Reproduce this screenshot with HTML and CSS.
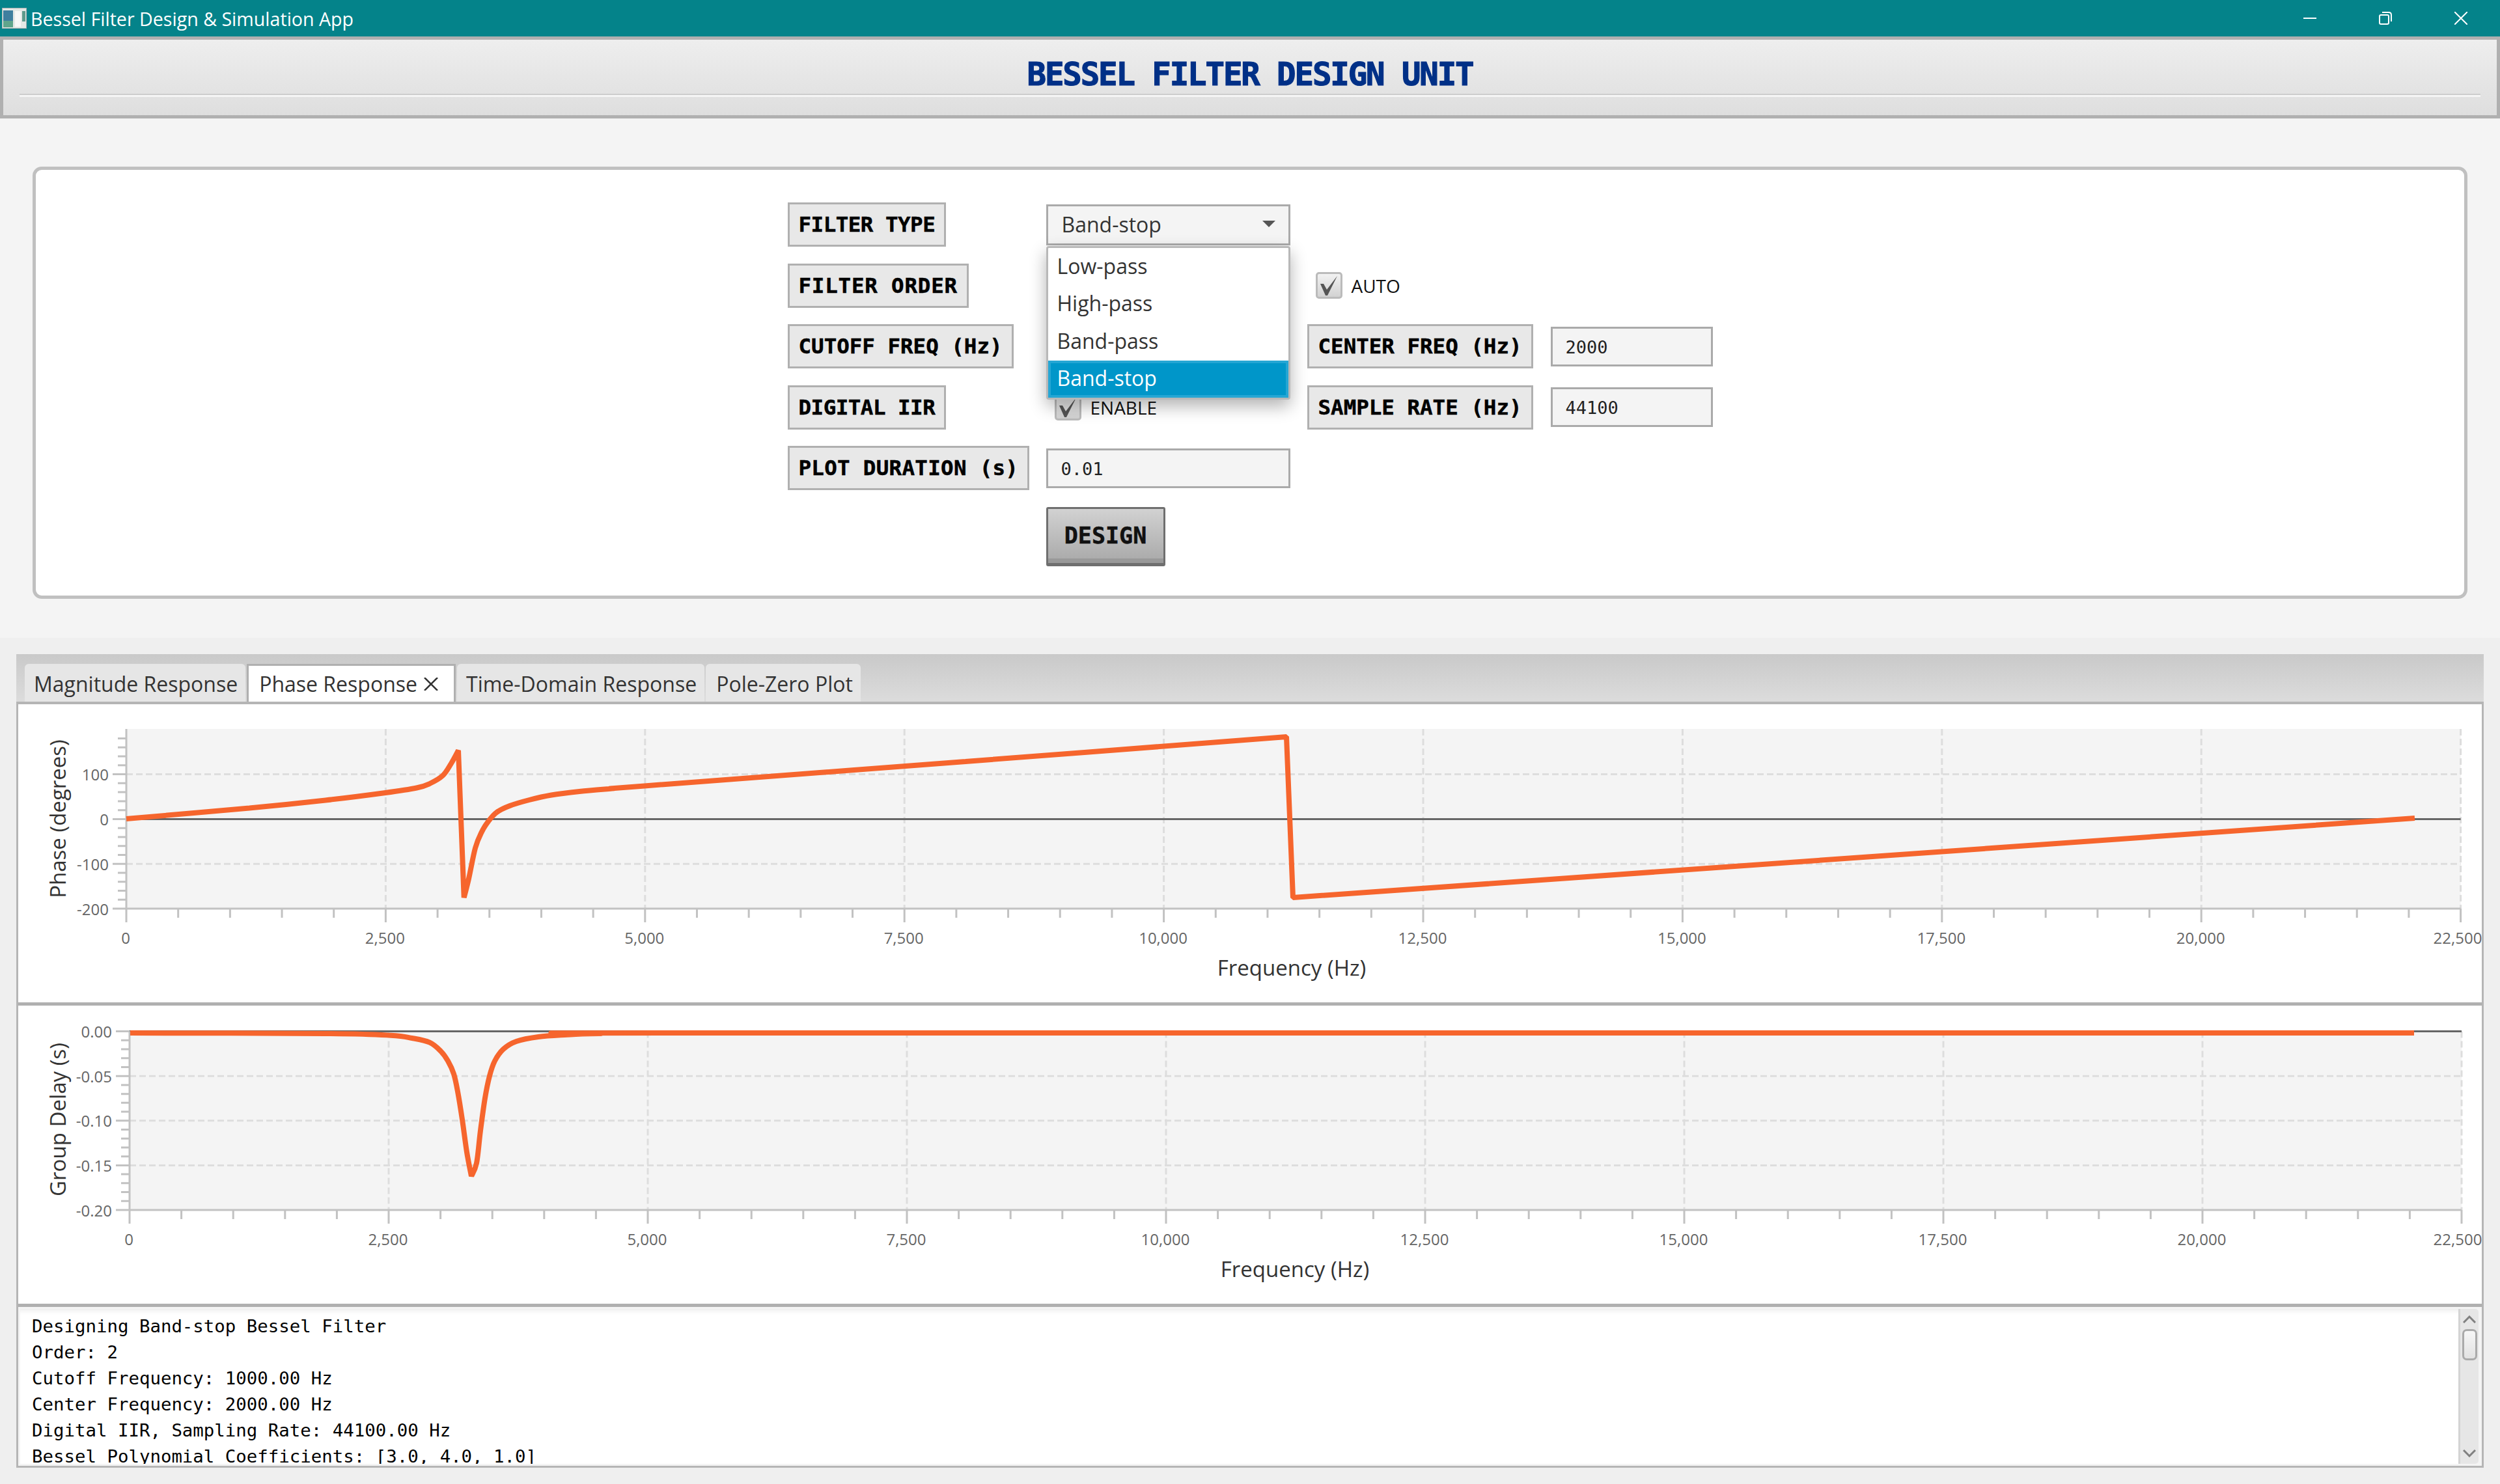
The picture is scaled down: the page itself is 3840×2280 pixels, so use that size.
FILE: index.html
```html
<!DOCTYPE html>
<html lang="en">
<head>
    <meta charset="UTF-8">
    <title>Bessel Filter Design &amp; Simulation App</title>
    <link rel="stylesheet" href="styles.css">
</head>
<body>
    <div class="titlebar">
        <svg class="app-icon" viewBox="0 0 38 32">
            <rect x="0.5" y="0.5" width="37" height="31" fill="#e4e8e6" stroke="#a9b1b2"/>
            <rect x="2" y="4" width="15" height="26" fill="#3f7f9f"/>
            <rect x="2" y="20" width="15" height="10" fill="#5fa58c"/>
            <rect x="20" y="5" width="9" height="24" fill="#f7f7f7"/>
            <rect x="31" y="5" width="5" height="16" fill="#5f9a8c"/>
        </svg>
        <span class="window-title">Bessel Filter Design &amp; Simulation App</span>
        <div class="window-buttons">
            <svg viewBox="0 0 20 20"><path d="M0 10H20"/></svg>
            <svg viewBox="0 0 20 20"><rect x="1" y="5" width="14" height="14" rx="2"/><path d="M5 1H15Q19 1 19 5V15"/></svg>
            <svg viewBox="0 0 20 20"><path d="M0 0L20 20M20 0L0 20"/></svg>
        </div>
    </div>

    <header class="app-header">
        <h1>BESSEL FILTER DESIGN UNIT</h1>
        <div class="groove"></div>
    </header>

    <section class="card">
        <form class="form-grid">
            <div class="field-label tight row1">FILTER TYPE</div>
            <div class="combo row1">
                <span>Band-stop</span>
                <svg class="combo-arrow" viewBox="0 0 20 10"><path d="M0 0H20L10 10Z"/></svg>
            </div>

            <div class="field-label wide row2">FILTER ORDER</div>
            <input class="field-input row2" type="text" readonly>
            <label class="check row2">
                <span class="check-box"><svg viewBox="0 0 41 41"><path d="M7 18L12 18L17 27L33 6L18 36L15 36Z"/></svg></span>
                AUTO
            </label>

            <div class="field-label row3">CUTOFF FREQ (Hz)</div>
            <input class="field-input row3" type="text" readonly>
            <div class="field-label row3">CENTER FREQ (Hz)</div>
            <input class="field-input row3" type="text" value="2000" readonly>

            <div class="field-label tight row4">DIGITAL IIR</div>
            <label class="check row4">
                <span class="check-box"><svg viewBox="0 0 41 41"><path d="M7 18L12 18L17 27L33 6L18 36L15 36Z"/></svg></span>
                ENABLE
            </label>
            <div class="field-label row4">SAMPLE RATE (Hz)</div>
            <input class="field-input row4" type="text" value="44100" readonly>

            <div class="field-label plot-label row5">PLOT DURATION (s)</div>
            <input class="field-input row5" type="text" value="0.01" readonly>

            <button class="design-btn" type="button">DESIGN</button>

            <ul class="combo-popup">
                <li>Low-pass</li>
                <li>High-pass</li>
                <li>Band-pass</li>
                <li class="selected">Band-stop</li>
            </ul>
        </form>
    </section>

    <section class="lower">
        <div class="tab-header">
            <div class="tab">Magnitude Response</div>
            <div class="tab active">
                Phase Response
                <svg class="tab-close" viewBox="0 0 22 20"><path d="M1 0L21 20M21 0L1 20"/></svg>
            </div>
            <div class="tab">Time-Domain Response</div>
            <div class="tab">Pole-Zero Plot</div>
        </div>
        <div class="tab-content">
            <svg class="chart" id="phaseChart" viewBox="28 1082 3784 458"></svg>
            <div class="divider"></div>
            <svg class="chart" id="delayChart" viewBox="28 1545 3784 458"></svg>
            <div class="divider"></div>
            <div class="log">
                <div class="log-text">
                    <div>Designing Band-stop Bessel Filter</div>
                    <div>Order: 2</div>
                    <div>Cutoff Frequency: 1000.00 Hz</div>
                    <div>Center Frequency: 2000.00 Hz</div>
                    <div>Digital IIR, Sampling Rate: 44100.00 Hz</div>
                    <div>Bessel Polynomial Coefficients: [3.0, 4.0, 1.0]</div>
                </div>
                <div class="scrollbar">
                    <svg class="scroll-arrow" viewBox="0 0 20 12"><path d="M1 11L10 2L19 11"/></svg>
                    <div class="scroll-track"><div class="scroll-thumb"></div></div>
                    <svg class="scroll-arrow" viewBox="0 0 20 12"><path d="M1 1L10 10L19 1"/></svg>
                </div>
            </div>
        </div>
    </section>

    <script src="charts.js"></script>
</body>
</html>
```

FILE: styles.css
```css
* {
    box-sizing: border-box;
}
html, body {
    margin: 0;
    padding: 0;
}
body {
    width: 3840px;
    height: 2280px;
    overflow: hidden;
    background-color: #f4f4f4;
    font-family: "Open Sans", sans-serif;
    color: #333;
}

/* window title bar */
.titlebar {
    height: 56px;
    background-color: #04838a;
    color: white;
    display: flex;
    align-items: center;
    padding-left: 3px;
}
.app-icon {
    width: 38px;
    height: 32px;
}
.window-title {
    margin-left: 6px;
    font-size: 28.6px;
}
.window-buttons {
    margin-left: auto;
    display: flex;
    gap: 96px;
    padding-right: 50px;
}
.window-buttons svg {
    width: 20px;
    height: 20px;
    fill: none;
    stroke: white;
    stroke-width: 2;
}

/* big heading */
.app-header {
    height: 126px;
    border: 5px solid #b0b0b0;
    background: linear-gradient(#eeeeee, #dedede);
}
.app-header h1 {
    margin: 0;
    height: 83px;
    padding-top: 24px;
    display: flex;
    align-items: center;
    justify-content: center;
    font-family: "DejaVu Sans Mono", monospace;
    font-weight: bold;
    font-size: 49px;
    letter-spacing: -2.1px;
    color: #003087;
    -webkit-text-stroke: 1.2px #003087;
}
.groove {
    margin: 0 25px;
    height: 5px;
    border-top: 2px solid #cdcdcd;
    background-color: #f5f5f5;
}

/* form card */
.card {
    height: 664px;
    margin: 74px 50px 0;
    padding-top: 50px;
    background-color: white;
    border: 5px solid #c0c0c0;
    border-radius: 14px;
}
.form-grid {
    position: relative;
    display: grid;
    grid-template-columns: 371px 375px 348px 249px;
    grid-template-rows: repeat(5, 68px) 91px;
    column-gap: 26px;
    row-gap: 25.5px;
    justify-content: center;
    align-items: center;
    width: 1421px;
    margin: 0 auto;
}
.row1 { grid-row: 1; }
.row2 { grid-row: 2; }
.row3 { grid-row: 3; }
.row4 { grid-row: 4; }
.row5 { grid-row: 5; }
.field-label {
    height: 68px;
    justify-self: start;
    display: flex;
    align-items: center;
    padding: 0 14px;
    background-color: #e8e8e8;
    border: 3px solid #b0b0b0;
    font-family: "DejaVu Sans Mono", monospace;
    font-weight: bold;
    font-size: 32.5px;
    color: black;
    white-space: nowrap;
    -webkit-text-stroke: 0.5px black;
}
.field-label.tight { letter-spacing: -0.5px; }
.field-label.wide { letter-spacing: 0.8px; }
.field-label.plot-label { letter-spacing: 0.3px; }
.field-input {
    width: 100%;
    height: 61px;
    padding: 2px 20px 0;
    background-color: #f4f4f4;
    border: 3px solid #aaaaaa;
    border-radius: 0;
    outline: none;
    font-family: "DejaVu Sans Mono", monospace;
    font-size: 27px;
    color: #222;
}
.combo {
    height: 63px;
    grid-column: 2;
    display: flex;
    align-items: center;
    justify-content: space-between;
    padding: 0 20px 2px 21px;
    background-color: #f4f4f4;
    border: 3px solid #aaaaaa;
    font-size: 32px;
}
.combo-arrow {
    width: 20px;
    height: 10px;
    fill: #555;
}
.check {
    display: flex;
    align-items: center;
    gap: 14px;
    padding-left: 13px;
    font-size: 28px;
    color: #111;
}
.check-box {
    width: 41px;
    height: 41px;
    background: linear-gradient(#f2f2f2, #d2d2d2);
    border: 3px solid #bbbbbb;
    border-radius: 5px;
    display: flex;
}
.check-box svg {
    flex: none;
    width: 41px;
    height: 41px;
    margin: -3px;
    fill: #555;
}
.design-btn {
    grid-row: 6;
    grid-column: 2;
    justify-self: start;
    width: 183px;
    height: 91px;
    background: linear-gradient(#d2d2d2, #a8a8a8);
    border: 3px solid #6f6f6f;
    border-bottom-width: 5px;
    border-radius: 3px;
    box-shadow: inset 0 -7px 0 #999;
    font-family: "DejaVu Sans Mono", monospace;
    font-weight: bold;
    font-size: 35px;
    color: #111;
    -webkit-text-stroke: 0.5px #111;
}
.combo-popup {
    position: absolute;
    left: 397px;
    top: 67px;
    width: 375px;
    margin: 0;
    padding: 0;
    list-style: none;
    background-color: white;
    border: 3px solid #b8b8b8;
    border-radius: 4px;
    box-shadow: 0 10px 26px rgba(0, 0, 0, 0.3);
    font-size: 32px;
}
.combo-popup li {
    height: 57.5px;
    padding: 0 0 3px 14px;
    display: flex;
    align-items: center;
}
.combo-popup li.selected {
    background-color: #0096c9;
    box-shadow: inset 0 0 0 4px #25a6d4;
    color: white;
}

/* tabs and charts */
.lower {
    height: 1300px;
    margin-top: 60px;
    padding: 25px 25px 0;
    background-color: #efefef;
}
.tab-header {
    height: 77px;
    padding-left: 13px;
    display: flex;
    align-items: flex-end;
    gap: 2px;
    background: linear-gradient(#c9c9c9, #dcdcdc);
    border-bottom: 4px solid #b5b5b5;
}
.tab {
    height: 58px;
    padding: 2px 12px 0 14px;
    display: flex;
    align-items: center;
    gap: 10px;
    background-color: #e6e6e6;
    border-radius: 6px 6px 0 0;
    font-size: 32px;
    white-space: nowrap;
}
.tab.active {
    background-color: white;
    border: 3px solid #b0b0b0;
    border-bottom: none;
    border-radius: 0;
    padding: 0 24px 0 16px;
}
.tab:last-child {
    padding-left: 16px;
}
.tab-close {
    width: 22px;
    height: 20px;
    fill: none;
    stroke: #333;
    stroke-width: 2.5;
}
.tab-content {
    height: 1173px;
    border: 3px solid #b5b5b5;
    border-top: none;
    background-color: white;
}
.chart {
    display: block;
    width: 3784px;
    height: 458px;
}
.divider {
    height: 5px;
    background-color: #b0b0b0;
}
.plot-bg { fill: #f4f4f4; }
.grid-line {
    stroke: #dddddd;
    stroke-width: 3;
    stroke-dasharray: 10 5;
    fill: none;
}
.axis-line {
    stroke: #c2c2c2;
    stroke-width: 3;
    fill: none;
}
.zero-line {
    stroke: #666;
    stroke-width: 3;
}
.curve {
    fill: none;
    stroke: #f6652d;
    stroke-width: 8;
    stroke-linejoin: bevel;
}
.tick-label {
    font-size: 24px;
    fill: #666;
    dominant-baseline: central;
}
.axis-title {
    font-size: 33px;
    fill: #333;
    text-anchor: middle;
    dominant-baseline: central;
}

/* log area */
.log {
    height: 244px;
    padding: 3px 5px 3px 3px;
    display: flex;
    background-color: #f4f4f4;
}
.log-text {
    flex: 1;
    padding: 7px 18px 0;
    overflow: hidden;
    background-color: white;
    box-shadow: inset 0 10px 8px -8px #e8e8e8;
    font-family: "DejaVu Sans Mono", monospace;
    font-size: 27.4px;
    line-height: 40px;
    color: black;
}
.scrollbar {
    width: 31px;
    display: flex;
    flex-direction: column;
    align-items: center;
    padding-top: 10px;
    background-color: #e6e6e6;
    border-left: 3px solid #d4d4d4;
    border-radius: 0 5px 5px 0;
}
.scroll-arrow {
    width: 20px;
    height: 12px;
    fill: none;
    stroke: #808080;
    stroke-width: 3;
    flex: none;
}
.scroll-track {
    flex: 1;
    padding-top: 9px;
}
.scroll-thumb {
    width: 23px;
    height: 48px;
    background: linear-gradient(#f6f6f6, #e2e2e2);
    border: 3px solid #aaaaaa;
    border-radius: 7px;
}
.scroll-arrow:last-child {
    margin-bottom: 10px;
}
```

FILE: charts.js
```js
// both charts share the same frequency axis layout
var SVG_NS = "http://www.w3.org/2000/svg";

function add(svg, tag, attrs, text) {
    var el = document.createElementNS(SVG_NS, tag);
    for (var key in attrs) {
        el.setAttribute(key, attrs[key]);
    }
    if (text) {
        el.textContent = text;
    }
    svg.appendChild(el);
}

// catmull-rom through one smooth run of points, the runs meet in hard corners
function curvePath(runs) {
    var d = "";
    runs.forEach(function (pts, r) {
        d += (r === 0 ? "M" : "L") + pts[0].join(" ");
        for (var i = 0; i < pts.length - 1; i++) {
            var p0 = pts[Math.max(i - 1, 0)];
            var p1 = pts[i];
            var p2 = pts[i + 1];
            var p3 = pts[Math.min(i + 2, pts.length - 1)];
            d += "C" + (p1[0] + (p2[0] - p0[0]) / 6) + " " + (p1[1] + (p2[1] - p0[1]) / 6) +
                " " + (p2[0] - (p3[0] - p1[0]) / 6) + " " + (p2[1] - (p3[1] - p1[1]) / 6) +
                " " + p2[0] + " " + p2[1];
        }
    });
    return d;
}

function drawChart(id, c) {
    var svg = document.getElementById(id);
    var right = c.left + c.xStep * 9;
    var i;

    add(svg, "rect", { "class": "plot-bg", x: c.left, y: c.top, width: right - c.left, height: c.bottom - c.top });

    // grid
    var grid = "";
    for (i = 1; i <= 9; i++) {
        var gx = c.left + i * c.xStep;
        grid += "M" + gx + " " + c.top + "V" + c.bottom;
    }
    c.yLabels.forEach(function (label, n) {
        if (n > 0 && label !== c.zeroLabel) {
            grid += "M" + c.left + " " + (c.bottom - n * c.yStep) + "H" + right;
        }
    });
    add(svg, "path", { "class": "grid-line", d: grid });

    var zeroY = c.bottom - c.yLabels.indexOf(c.zeroLabel) * c.yStep;
    add(svg, "line", { "class": "zero-line", x1: c.left, x2: right, y1: zeroY, y2: zeroY });

    // axes with major and minor ticks
    var ticks = "M" + c.left + " " + c.top + "V" + c.bottom + "H" + right;
    for (i = 0; i <= 45; i++) {
        var tx = c.left + i * c.xStep / 5;
        ticks += "M" + tx + " " + c.bottom + "V" + (c.bottom + (i % 5 === 0 ? 21 : 14));
    }
    for (i = 0; i <= c.yMinor; i++) {
        var ty = c.bottom - i * c.yStep / 5;
        ticks += "M" + c.left + " " + ty + "H" + (c.left - (i % 5 === 0 ? 21 : 13));
    }
    add(svg, "path", { "class": "axis-line", d: ticks });

    add(svg, "path", { "class": "curve", d: curvePath(c.runs) });

    // labels, the last one has to stay inside the pane
    for (i = 0; i <= 9; i++) {
        var hz = (i * 2500).toLocaleString("en-US");
        var lx = Math.min(c.left - 1 + i * c.xStep, 3775);
        add(svg, "text", { "class": "tick-label", x: lx, y: c.bottom + 44, "text-anchor": "middle" }, hz);
    }
    c.yLabels.forEach(function (label, n) {
        add(svg, "text", { "class": "tick-label", x: c.left - 27, y: c.bottom - n * c.yStep, "text-anchor": "end" }, label);
    });
    add(svg, "text", { "class": "axis-title", x: c.left + 1790, y: c.bottom + 90 }, "Frequency (Hz)");
    add(svg, "text", {
        "class": "axis-title",
        x: 88,
        y: c.titleY,
        transform: "rotate(-90 88 " + c.titleY + ")"
    }, c.yTitle);
}

drawChart("phaseChart", {
    left: 194, xStep: 398.4, top: 1120, bottom: 1396, yStep: 68.8, yMinor: 19,
    yLabels: ["-200", "-100", "0", "100"], zeroLabel: "0",
    yTitle: "Phase (degrees)", titleY: 1258,
    runs: [
        [[194, 1258], [383, 1241.5], [500, 1229.5], [592, 1218], [640, 1210.5], [660, 1204], [680, 1191.7], [693, 1173], [704, 1153]],
        [[712.7, 1379], [720, 1350], [730, 1303], [740, 1278], [750, 1262], [763, 1248], [783, 1238], [813, 1229],
            [847, 1221.5], [890, 1216], [940, 1211.5], [990, 1207.4], [1483, 1170], [1976, 1132]],
        [[1986, 1379], [3709, 1257]]
    ]
});

drawChart("delayChart", {
    left: 199, xStep: 398, top: 1584.5, bottom: 1859, yStep: 68.6, yMinor: 20,
    yLabels: ["-0.20", "-0.15", "-0.10", "-0.05", "0.00"], zeroLabel: "0.00",
    yTitle: "Group Delay (s)", titleY: 1720,
    runs: [
        [[200, 1587], [500, 1588], [600, 1590.7], [633, 1595], [660, 1601.7], [677, 1615], [688, 1630], [697, 1650],
            [703, 1677], [710, 1720], [717, 1770], [724, 1807]],
        [[724, 1807], [732, 1787], [738, 1737], [745, 1687], [752, 1653], [760, 1630], [773, 1612], [793, 1600],
            [827, 1593], [867, 1590], [920, 1588], [1100, 1587], [3708, 1587]]
    ]
});
```
